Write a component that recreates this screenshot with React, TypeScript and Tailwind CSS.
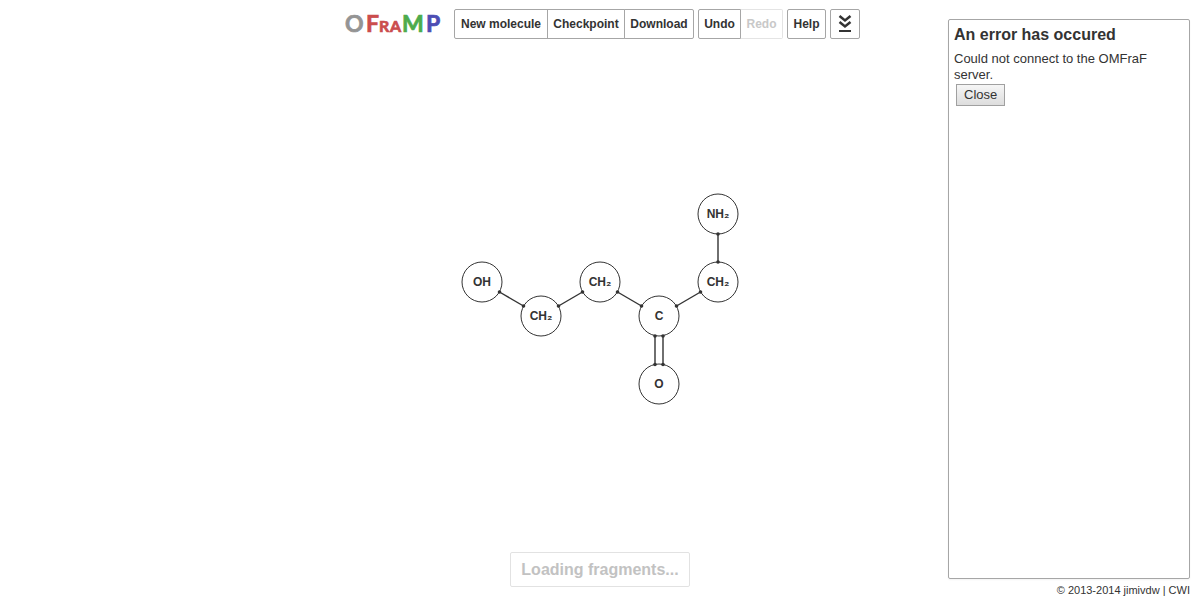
import type { ReactNode } from "react";

type Atom = { id: string; label: string; x: number; y: number };

const atoms: Atom[] = [
  { id: "a1", label: "OH", x: 482, y: 282 },
  { id: "a2", label: "CH₂", x: 541, y: 316 },
  { id: "a3", label: "CH₂", x: 600, y: 282 },
  { id: "a4", label: "C", x: 659, y: 316 },
  { id: "a5", label: "CH₂", x: 718, y: 282 },
  { id: "a6", label: "NH₂", x: 718, y: 214 },
  { id: "a7", label: "O", x: 659, y: 384 },
];

// Bond end points: x1, y1, x2, y2
const bonds: [number, number, number, number][] = [
  [499.5, 292, 523.5, 306],
  [558.5, 306, 582.5, 292],
  [617.5, 292, 641.5, 306],
  [676.5, 306, 700.5, 292],
  [718, 234, 718, 262],
  [655, 336, 655, 364.5],
  [663, 336, 663, 364.5],
];

function Molecule() {
  return (
    <svg
      viewBox="460 192 280 214"
      className="h-[214px] w-[280px]"
      role="img"
      aria-label="Molecule"
    >
      {atoms.map((a) => (
        <g key={a.id}>
          <circle cx={a.x} cy={a.y} r="20" fill="#fff" stroke="#333" />
          <text
            x={a.x}
            y={a.y + 4}
            textAnchor="middle"
            fill="#333"
            className="font-['Liberation_Sans','DejaVu_Sans',sans-serif] text-[12px] font-bold"
          >
            {a.label}
          </text>
        </g>
      ))}
      {bonds.map(([x1, y1, x2, y2]) => (
        <g key={`${x1}-${y1}`} fill="#333">
          <line x1={x1} y1={y1} x2={x2} y2={y2} stroke="#333" strokeWidth="1.4" />
          <circle cx={x1} cy={y1} r="1.8" />
          <circle cx={x2} cy={y2} r="1.8" />
        </g>
      ))}
    </svg>
  );
}

const logoLetters = [
  { char: "O", x: 0, size: 23, color: "#949494" },
  { char: "F", x: 21, size: 23, color: "#cb4d4d" },
  { char: "R", x: 34, size: 16, color: "#cb4d4d" },
  { char: "A", x: 45, size: 16, color: "#cb4d4d" },
  { char: "M", x: 57, size: 23, color: "#4dab4d" },
  { char: "P", x: 81, size: 23, color: "#4d4db3" },
];

function Logo() {
  return (
    <svg
      viewBox="0 0 97 30"
      className="h-[30px] w-[97px] font-['Lato',sans-serif] font-bold"
      role="img"
      aria-label="OFraMP"
    >
      {logoLetters.map((l) => (
        <text
          key={l.char}
          x={l.x}
          y="23"
          fontSize={l.size}
          fill={l.color}
          stroke={l.color}
          strokeWidth="0.7"
        >
          {l.char}
        </text>
      ))}
    </svg>
  );
}

function ToolButton({
  children,
  width,
  disabled,
  label,
}: {
  children: ReactNode;
  width: string;
  disabled?: boolean;
  label?: string;
}) {
  return (
    <button
      type="button"
      disabled={disabled}
      aria-label={label}
      className={`${width} -ml-px flex h-[30px] items-center justify-center border border-[#a6a6a6] bg-white text-xs font-bold whitespace-nowrap first:ml-0 first:rounded-l-xs last:rounded-r-xs disabled:ml-0 disabled:border-l-0 disabled:border-[#e4e4e4] disabled:text-[#c8c8c8]`}
    >
      {children}
    </button>
  );
}

function ButtonGroup({ children }: { children: ReactNode }) {
  return <div className="flex">{children}</div>;
}

export default function App() {
  return (
    <div className="grid h-screen grid-cols-[242px_1fr_242px] bg-white pr-[9px] pl-2.5 font-['Liberation_Sans',Arial,sans-serif] text-[#333]">
      <main className="col-start-2 flex min-h-0 flex-col items-center pb-[11px]">
        <header className="flex h-[46px] items-start gap-1 pt-[9px] pl-[5px]">
          <h1 className="mr-2">
            <Logo />
          </h1>
          <ButtonGroup>
            <ToolButton width="w-[94px]">New molecule</ToolButton>
            <ToolButton width="w-[78px]">Checkpoint</ToolButton>
            <ToolButton width="w-[70px]">Download</ToolButton>
          </ButtonGroup>
          <ButtonGroup>
            <ToolButton width="w-[43px]">Undo</ToolButton>
            <ToolButton width="w-[42px]" disabled>
              Redo
            </ToolButton>
          </ButtonGroup>
          <ButtonGroup>
            <ToolButton width="w-[39px]">Help</ToolButton>
          </ButtonGroup>
          <ButtonGroup>
            <ToolButton width="w-[30px]" label="Show more">
              <svg
                viewBox="0 0 16 20"
                className="h-5 w-4"
                fill="none"
                stroke="#333"
                strokeWidth="2.5"
              >
                <path d="M2.5 2l5.5 4.5L13.5 2M2.5 8l5.5 4.5L13.5 8" />
                <path d="M2 17h12" strokeWidth="2" />
              </svg>
            </ToolButton>
          </ButtonGroup>
        </header>
        <div className="flex min-h-0 flex-1 items-center">
          <Molecule />
        </div>
        <div
          role="status"
          className="flex h-[35px] items-center rounded-xs border border-[#e2e2e2] px-2.5 font-bold text-[#c2c2c2]"
        >
          Loading fragments...
        </div>
      </main>
      <div className="flex min-h-0 flex-col pt-[19px]">
        <aside className="flex-1 rounded-xs border border-[#a6a6a6] px-[5px] pt-[5px] shadow-xs">
          <h2 className="leading-5 font-bold">An error has occured</h2>
          <p className="mt-1.5 text-[13px] leading-4">
            Could not connect to the OMFraF server.
          </p>
          <button
            type="button"
            className="mt-px ml-0.5 block h-[22px] border border-[#a0a0a0] bg-linear-to-b from-[#f6f6f6] to-[#dddddd] px-[7px] text-[13px] leading-5"
          >
            Close
          </button>
        </aside>
        <footer className="pt-1 text-right text-[11px] leading-[15px]">
          © 2013-2014 <a href="#jimivdw">jimivdw</a> | <a href="#cwi">CWI</a>
        </footer>
      </div>
    </div>
  );
}
